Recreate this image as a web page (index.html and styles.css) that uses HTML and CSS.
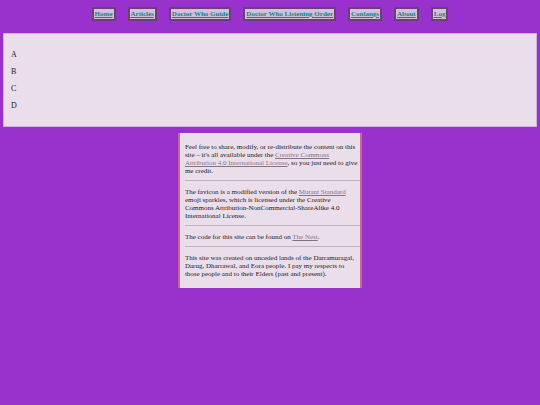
FILE: index.html
```html
<!DOCTYPE html>
<html lang="en">
<head>
<meta charset="utf-8">
<meta name="viewport" content="width=device-width, initial-scale=1">
<title>Home</title>
<link rel="stylesheet" href="styles.css">
</head>
<body>
<nav class="site-nav">
  <a href="#">Home</a>
  <a href="#">Articles</a>
  <a href="#">Doctor Who Guide</a>
  <a href="#">Doctor Who Listening Order</a>
  <a href="#">Conlangs</a>
  <a href="#">About</a>
  <a href="#">Log</a>
</nav>
<main class="content">
  <p>A</p>
  <p>B</p>
  <p>C</p>
  <p>D</p>
</main>
<footer class="site-footer">
  <p>Feel free to share, modify, or re-distribute the content on this site – it's all available under the <a href="#">Creative Commons<br>Attribution 4.0 International License</a>, so you just need to give me credit.</p>
  <hr>
  <p>The favicon is a modified version of the <a href="#">Mutant Standard</a> emoji sparkles, which is licensed under the Creative Commons Attribution-NonCommercial-ShareAlike 4.0 International License.</p>
  <hr>
  <p>The code for this site can be found on <a href="#">The Nest</a>.</p>
  <hr>
  <p>This site was created on unceded lands of the Darramuragal, Darug, Dharrawal, and Eora people. I pay my respects to those people and to their Elders (past and present).</p>
</footer>
</body>
</html>
```
FILE: styles.css
```css
* {
  box-sizing: border-box;
}

body {
  margin: 0;
  padding: 7px 3px;
  background: #9932cc;
  color: #201a24;
  font-family: "Liberation Serif", "Times New Roman", serif;
  font-size: 8px;
}

p {
  margin: 0;
}

.site-nav {
  display: flex;
  justify-content: center;
  gap: 12px;
  margin-bottom: 12px;
}

.site-nav a {
  padding: 1px;
  border: 2px solid #694078;
  background: #d8bfd8;
  color: #138087;
  font-size: 7px;
  font-weight: bold;
  line-height: 8px;
}

.content {
  display: flex;
  flex-direction: column;
  gap: 8px;
  margin-bottom: 6px;
  padding: 16px 7px;
  border: 1px solid #d3aee2;
  background: #ebdeeb;
  line-height: 9px;
}

.site-footer {
  width: 34.5%;
  margin: 0 auto;
  padding: 10px 0 10px 5px;
  border: solid #d0668f;
  border-width: 0 2px;
  background: #ebdeeb;
  font-size: 7px;
  line-height: 8px;
}

.site-footer a {
  color: #86738b;
}

.site-footer hr {
  height: 1px;
  margin: 5px 0 7px;
  border: 0;
  background: #bdb2bd;
}
```
